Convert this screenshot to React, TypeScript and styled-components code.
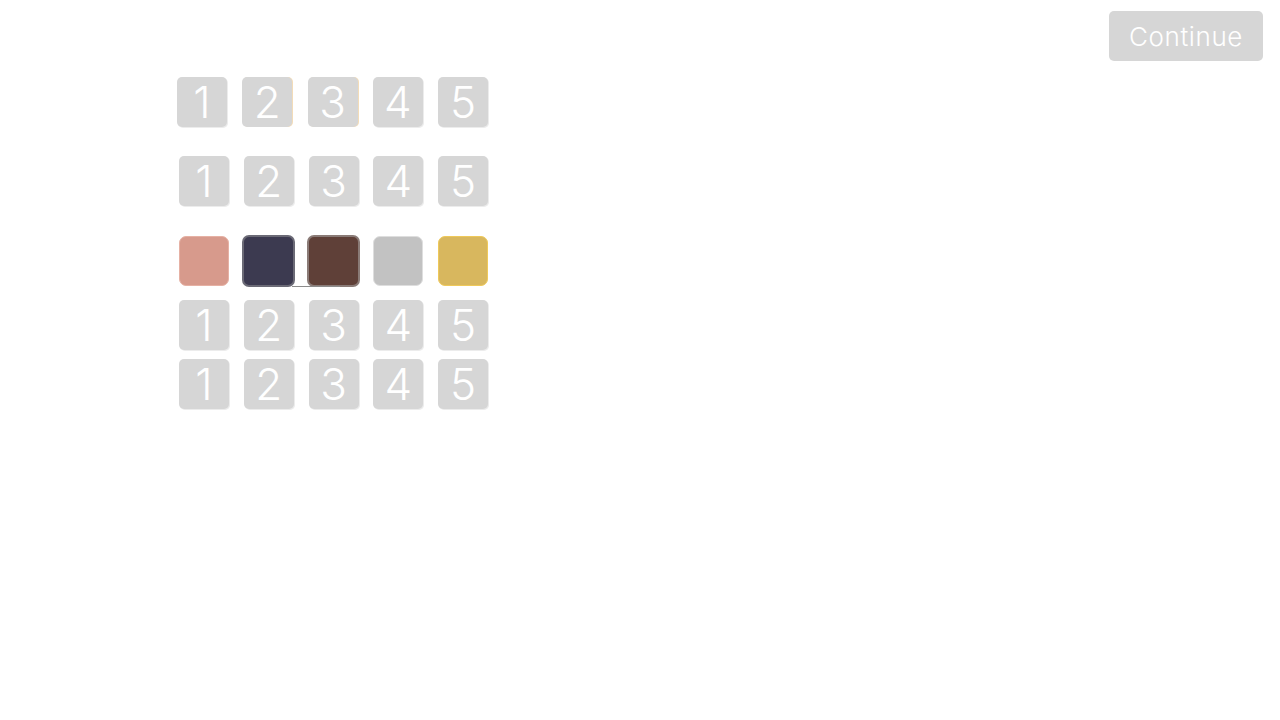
import React from 'react'
import styled, { createGlobalStyle } from 'styled-components'

const GlobalStyle = createGlobalStyle`
  html, body {
    margin: 0;
    padding: 0;
    background: #ffffff;
    font-family: Inter, 'Noto Sans', sans-serif;
  }
`

type Swatch = { color: string; border?: string; wide?: boolean; underline?: boolean }

const numbers = [1, 2, 3, 4, 5]

const swatches: Swatch[] = [
  { color: '#d79a8c', border: '#e6b1a4' },
  { color: '#3c3a50', border: '#6b6a76', wide: true },
  { color: '#5f4038', border: '#8a7b77', wide: true, underline: true },
  { color: '#c2c2c2', border: '#dedede' },
  { color: '#d8b75e', border: '#efc95a' },
]

const App = () => {
  return (
    <Page>
      <GlobalStyle />
      <Header>
        <ContinueButton>Continue</ContinueButton>
      </Header>

      <Board>
        <Row shift={-2} spacing={15.25} gapAfter={29}>
          {numbers.map((n) => (
            <NumberTile key={n} edge={n === 2 || n === 3}>
              {n}
            </NumberTile>
          ))}
        </Row>

        <Row gapAfter={30}>
          {numbers.map((n) => (
            <NumberTile key={n}>{n}</NumberTile>
          ))}
        </Row>

        <Row gapAfter={14}>
          {swatches.map((s, i) => (
            <ColorTile key={i} color={s.color} border={s.border} wide={s.wide}>
              {s.underline && <Underline />}
            </ColorTile>
          ))}
        </Row>

        <Row gapAfter={9}>
          {numbers.map((n) => (
            <NumberTile key={n}>{n}</NumberTile>
          ))}
        </Row>

        <Row>
          {numbers.map((n) => (
            <NumberTile key={n}>{n}</NumberTile>
          ))}
        </Row>
      </Board>
    </Page>
  )
}

const Page = styled.div`
  width: 1280px;
  height: 720px;
  display: flex;
  flex-direction: column;
`

const Header = styled.div`
  display: flex;
  justify-content: flex-end;
  padding: 11px 17px 0;
`

const ContinueButton = styled.button`
  width: 154px;
  height: 50px;
  border: none;
  border-radius: 5px;
  background: #d6d6d6;
  color: #ffffff;
  font-family: Inter, 'Noto Sans', sans-serif;
  font-weight: 300;
  font-size: 26px;
  letter-spacing: 0.6px;
  padding: 0;
  cursor: pointer;
`

const Board = styled.div`
  display: flex;
  flex-direction: column;
  margin: 16px 0 0 179px;
`

const Row = styled.div<{ shift?: number; spacing?: number; gapAfter?: number }>`
  display: flex;
  gap: ${({ spacing }) => spacing ?? 14.75}px;
  margin-left: ${({ shift }) => shift ?? 0}px;
  margin-bottom: ${({ gapAfter }) => gapAfter ?? 0}px;
`

const NumberTile = styled.div<{ edge?: boolean }>`
  width: 50px;
  height: 50px;
  box-sizing: border-box;
  border-radius: 5px;
  background: #d6d6d6;
  color: #ffffff;
  display: flex;
  align-items: center;
  justify-content: center;
  font-family: Inter, 'Noto Sans', sans-serif;
  font-weight: 350;
  font-size: 44px;
  line-height: 1;
  box-shadow: ${({ edge }) => (edge ? '1px 0 0 #f3dcb8' : '1px 1px 0 #ececec')};
`

const ColorTile = styled.div<{ color: string; border?: string; wide?: boolean }>`
  position: relative;
  width: ${({ wide }) => (wide ? 53 : 50)}px;
  height: ${({ wide }) => (wide ? 52 : 50)}px;
  margin: ${({ wide }) => (wide ? '-1px -1px -1px -2px' : '0')};
  box-sizing: border-box;
  border-radius: 7px;
  background: ${({ color }) => color};
  border: ${({ wide }) => (wide ? 2 : 1)}px solid ${({ border, color }) => border ?? color};
`

const Underline = styled.span`
  position: absolute;
  left: -17px;
  bottom: -2px;
  width: 48px;
  height: 1px;
  background: #8c8c8c;
`

export default App
